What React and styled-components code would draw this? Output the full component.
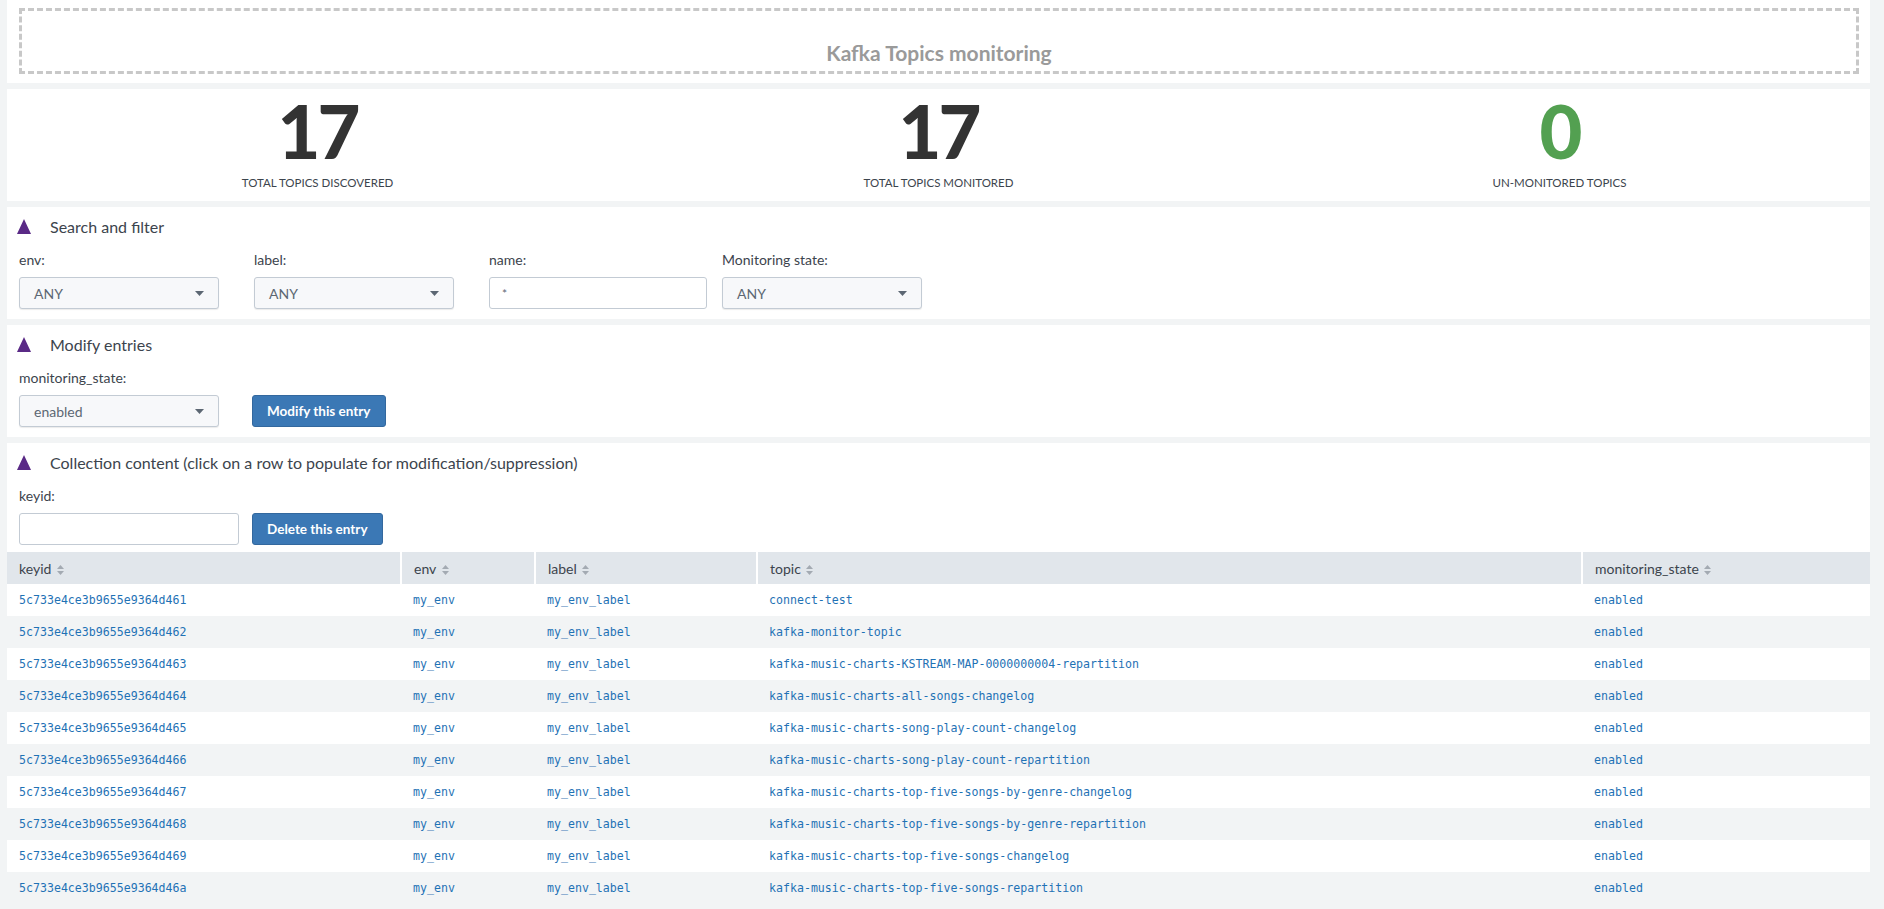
import React from "react";
import styled, { createGlobalStyle } from "styled-components";

const GlobalStyle = createGlobalStyle`
  html, body {
    margin: 0;
    padding: 0;
    background: #f2f4f5;
    font-family: Lato, "Open Sans", sans-serif;
    color: #3c444d;
    overflow: hidden;
  }
`;

const rows = [
  ["5c733e4ce3b9655e9364d461", "connect-test"],
  ["5c733e4ce3b9655e9364d462", "kafka-monitor-topic"],
  ["5c733e4ce3b9655e9364d463", "kafka-music-charts-KSTREAM-MAP-0000000004-repartition"],
  ["5c733e4ce3b9655e9364d464", "kafka-music-charts-all-songs-changelog"],
  ["5c733e4ce3b9655e9364d465", "kafka-music-charts-song-play-count-changelog"],
  ["5c733e4ce3b9655e9364d466", "kafka-music-charts-song-play-count-repartition"],
  ["5c733e4ce3b9655e9364d467", "kafka-music-charts-top-five-songs-by-genre-changelog"],
  ["5c733e4ce3b9655e9364d468", "kafka-music-charts-top-five-songs-by-genre-repartition"],
  ["5c733e4ce3b9655e9364d469", "kafka-music-charts-top-five-songs-changelog"],
  ["5c733e4ce3b9655e9364d46a", "kafka-music-charts-top-five-songs-repartition"],
];

const columns = [
  { name: "keyid", width: 394 },
  { name: "env", width: 134 },
  { name: "label", width: 222 },
  { name: "topic", width: 825 },
  { name: "monitoring_state", width: 288 },
];

function Caret() {
  return (
    <svg width="9" height="5" viewBox="0 0 9 5">
      <path d="M0 0 L9 0 L4.5 5 Z" fill="#5c6773" />
    </svg>
  );
}

function SortIcon() {
  return (
    <svg width="7" height="10" viewBox="0 0 7 10">
      <path d="M0 4 L3.5 0 L7 4 Z" fill="#a3aab2" />
      <path d="M0 6 L3.5 10 L7 6 Z" fill="#a3aab2" />
    </svg>
  );
}

function Toggle() {
  return (
    <svg width="14" height="15" viewBox="0 0 14 15">
      <path d="M7 0 L14 15 L0 15 Z" fill="#5a2a86" />
    </svg>
  );
}

function Stat({ value, label, green }) {
  return (
    <StatCell>
      <BigValue $green={green}>{value}</BigValue>
      <StatLabel>{label}</StatLabel>
    </StatCell>
  );
}

function Select({ value, width }) {
  return (
    <SelectBox $width={width}>
      <span>{value}</span>
      <Caret />
    </SelectBox>
  );
}

function Field({ label, children, gap }) {
  return (
    <FieldWrap $gap={gap}>
      <FieldLabel>{label}</FieldLabel>
      {children}
    </FieldWrap>
  );
}

export default function App() {
  return (
    <Page>
      <GlobalStyle />
      <Panel>
        <TitleBox>Kafka Topics monitoring</TitleBox>
      </Panel>

      <StatsPanel>
        <Stat value="17" label="TOTAL TOPICS DISCOVERED" />
        <Stat value="17" label="TOTAL TOPICS MONITORED" />
        <Stat value="0" label="UN-MONITORED TOPICS" green />
      </StatsPanel>

      <FormPanel>
        <PanelHeader>
          <Toggle />
          <span>Search and filter</span>
        </PanelHeader>
        <FieldRow>
          <Field label="env:">
            <Select value="ANY" />
          </Field>
          <Field label="label:">
            <Select value="ANY" />
          </Field>
          <Field label="name:" gap={15}>
            <TextInput $width={218}>*</TextInput>
          </Field>
          <Field label="Monitoring state:">
            <Select value="ANY" />
          </Field>
        </FieldRow>
      </FormPanel>

      <FormPanel>
        <PanelHeader>
          <Toggle />
          <span>Modify entries</span>
        </PanelHeader>
        <FieldRow>
          <Field label="monitoring_state:" gap={33}>
            <Select value="enabled" />
          </Field>
          <Button>Modify this entry</Button>
        </FieldRow>
      </FormPanel>

      <TablePanel>
        <PanelHeader>
          <Toggle />
          <span>Collection content (click on a row to populate for modification/suppression)</span>
        </PanelHeader>
        <FieldRow>
          <Field label="keyid:" gap={13}>
            <TextInput $width={220} />
          </Field>
          <Button>Delete this entry</Button>
        </FieldRow>
        <Table>
          <colgroup>
            {columns.map((c) => (
              <col key={c.name} style={{ width: c.width }} />
            ))}
          </colgroup>
          <thead>
            <tr>
              {columns.map((c) => (
                <Th key={c.name}>
                  {c.name} <SortIcon />
                </Th>
              ))}
            </tr>
          </thead>
          <tbody>
            {rows.map(([keyid, topic]) => (
              <Tr key={keyid}>
                <Td>{keyid}</Td>
                <Td>my_env</Td>
                <Td>my_env_label</Td>
                <Td>{topic}</Td>
                <Td>enabled</Td>
              </Tr>
            ))}
          </tbody>
        </Table>
      </TablePanel>
    </Page>
  );
}

const Page = styled.div`
  display: flex;
  flex-direction: column;
  gap: 6px;
  padding: 0 14px 0 7px;
  height: 909px;
  overflow: hidden;
`;

const Panel = styled.div`
  background: #fff;
  padding: 8px 11px 9px 12px;
`;

const TitleBox = styled.div`
  border: 3px dashed #c8c8c8;
  height: 66px;
  box-sizing: border-box;
  padding-top: 30px;
  text-align: center;
  font-size: 21px;
  line-height: 24px;
  font-weight: 700;
  color: #9a9a9a;
`;

const StatsPanel = styled.div`
  background: #fff;
  display: grid;
  grid-template-columns: repeat(3, 1fr);
  padding: 5px 0 11px;
`;

const StatCell = styled.div`
  display: flex;
  flex-direction: column;
  align-items: center;
`;

const BigValue = styled.div`
  font-size: 74px;
  line-height: 74px;
  font-weight: 900;
  letter-spacing: -3px;
  color: ${(p) => (p.$green ? "#53a051" : "#333333")};
`;

const StatLabel = styled.div`
  margin-top: 8px;
  font-size: 11.5px;
  line-height: 14px;
  color: #3c444d;
`;

const FormPanel = styled.div`
  background: #fff;
  padding: 0 12px 10px;
`;

const TablePanel = styled.div`
  background: #fff;
  padding: 0;
  & > div {
    padding-left: 12px;
    padding-right: 12px;
  }
`;

const PanelHeader = styled.div`
  display: flex;
  align-items: center;
  gap: 19px;
  height: 38px;
  margin-left: -2px;
  font-size: 16px;
  color: #3c444d;
`;

const FieldRow = styled.div`
  display: flex;
  align-items: flex-end;
`;

const FieldWrap = styled.div`
  display: flex;
  flex-direction: column;
  margin-right: ${(p) => (p.$gap ?? 35)}px;
`;

const FieldLabel = styled.div`
  font-size: 14px;
  line-height: 16px;
  margin: 7px 0 9px;
  color: #3c444d;
`;

const SelectBox = styled.div`
  box-sizing: border-box;
  width: ${(p) => p.$width || 200}px;
  height: 32px;
  display: flex;
  align-items: center;
  justify-content: space-between;
  padding: 0 14px 0 14px;
  background: #f7f8fa;
  border: 1px solid #c3cbd4;
  border-radius: 3px;
  box-shadow: 0 1px 1px rgba(0, 0, 0, 0.08);
  font-size: 14px;
  color: #5c6773;
`;

const TextInput = styled.div`
  box-sizing: border-box;
  width: ${(p) => p.$width}px;
  height: 32px;
  display: flex;
  align-items: center;
  padding: 0 12px;
  background: #fff;
  border: 1px solid #c3cbd4;
  border-radius: 3px;
  font-size: 12px;
  color: #5c6773;
`;

const Button = styled.button`
  height: 32px;
  padding: 0 14px;
  background: #3b78b5;
  border: 1px solid #33689e;
  border-radius: 3px;
  color: #fff;
  font-family: Lato, sans-serif;
  font-size: 13.5px;
  font-weight: 700;
`;

const Table = styled.table`
  margin-top: 7px;
  width: 100%;
  table-layout: fixed;
  border-collapse: collapse;
`;

const Th = styled.th`
  background: #e1e6eb;
  height: 32px;
  padding: 0 12px;
  text-align: left;
  font-weight: 400;
  font-size: 14px;
  color: #3c444d;
  border-left: 2px solid #fff;
  white-space: nowrap;
  &:first-child {
    border-left: none;
  }
  svg {
    margin-left: 2px;
    vertical-align: -1px;
  }
`;

const Tr = styled.tr`
  &:nth-child(even) {
    background: #f2f4f5;
  }
`;

const Td = styled.td`
  height: 32px;
  padding: 0 12px;
  font-family: "DejaVu Sans Mono", monospace;
  font-size: 11.6px;
  color: #1f72b5;
  white-space: nowrap;
`;
